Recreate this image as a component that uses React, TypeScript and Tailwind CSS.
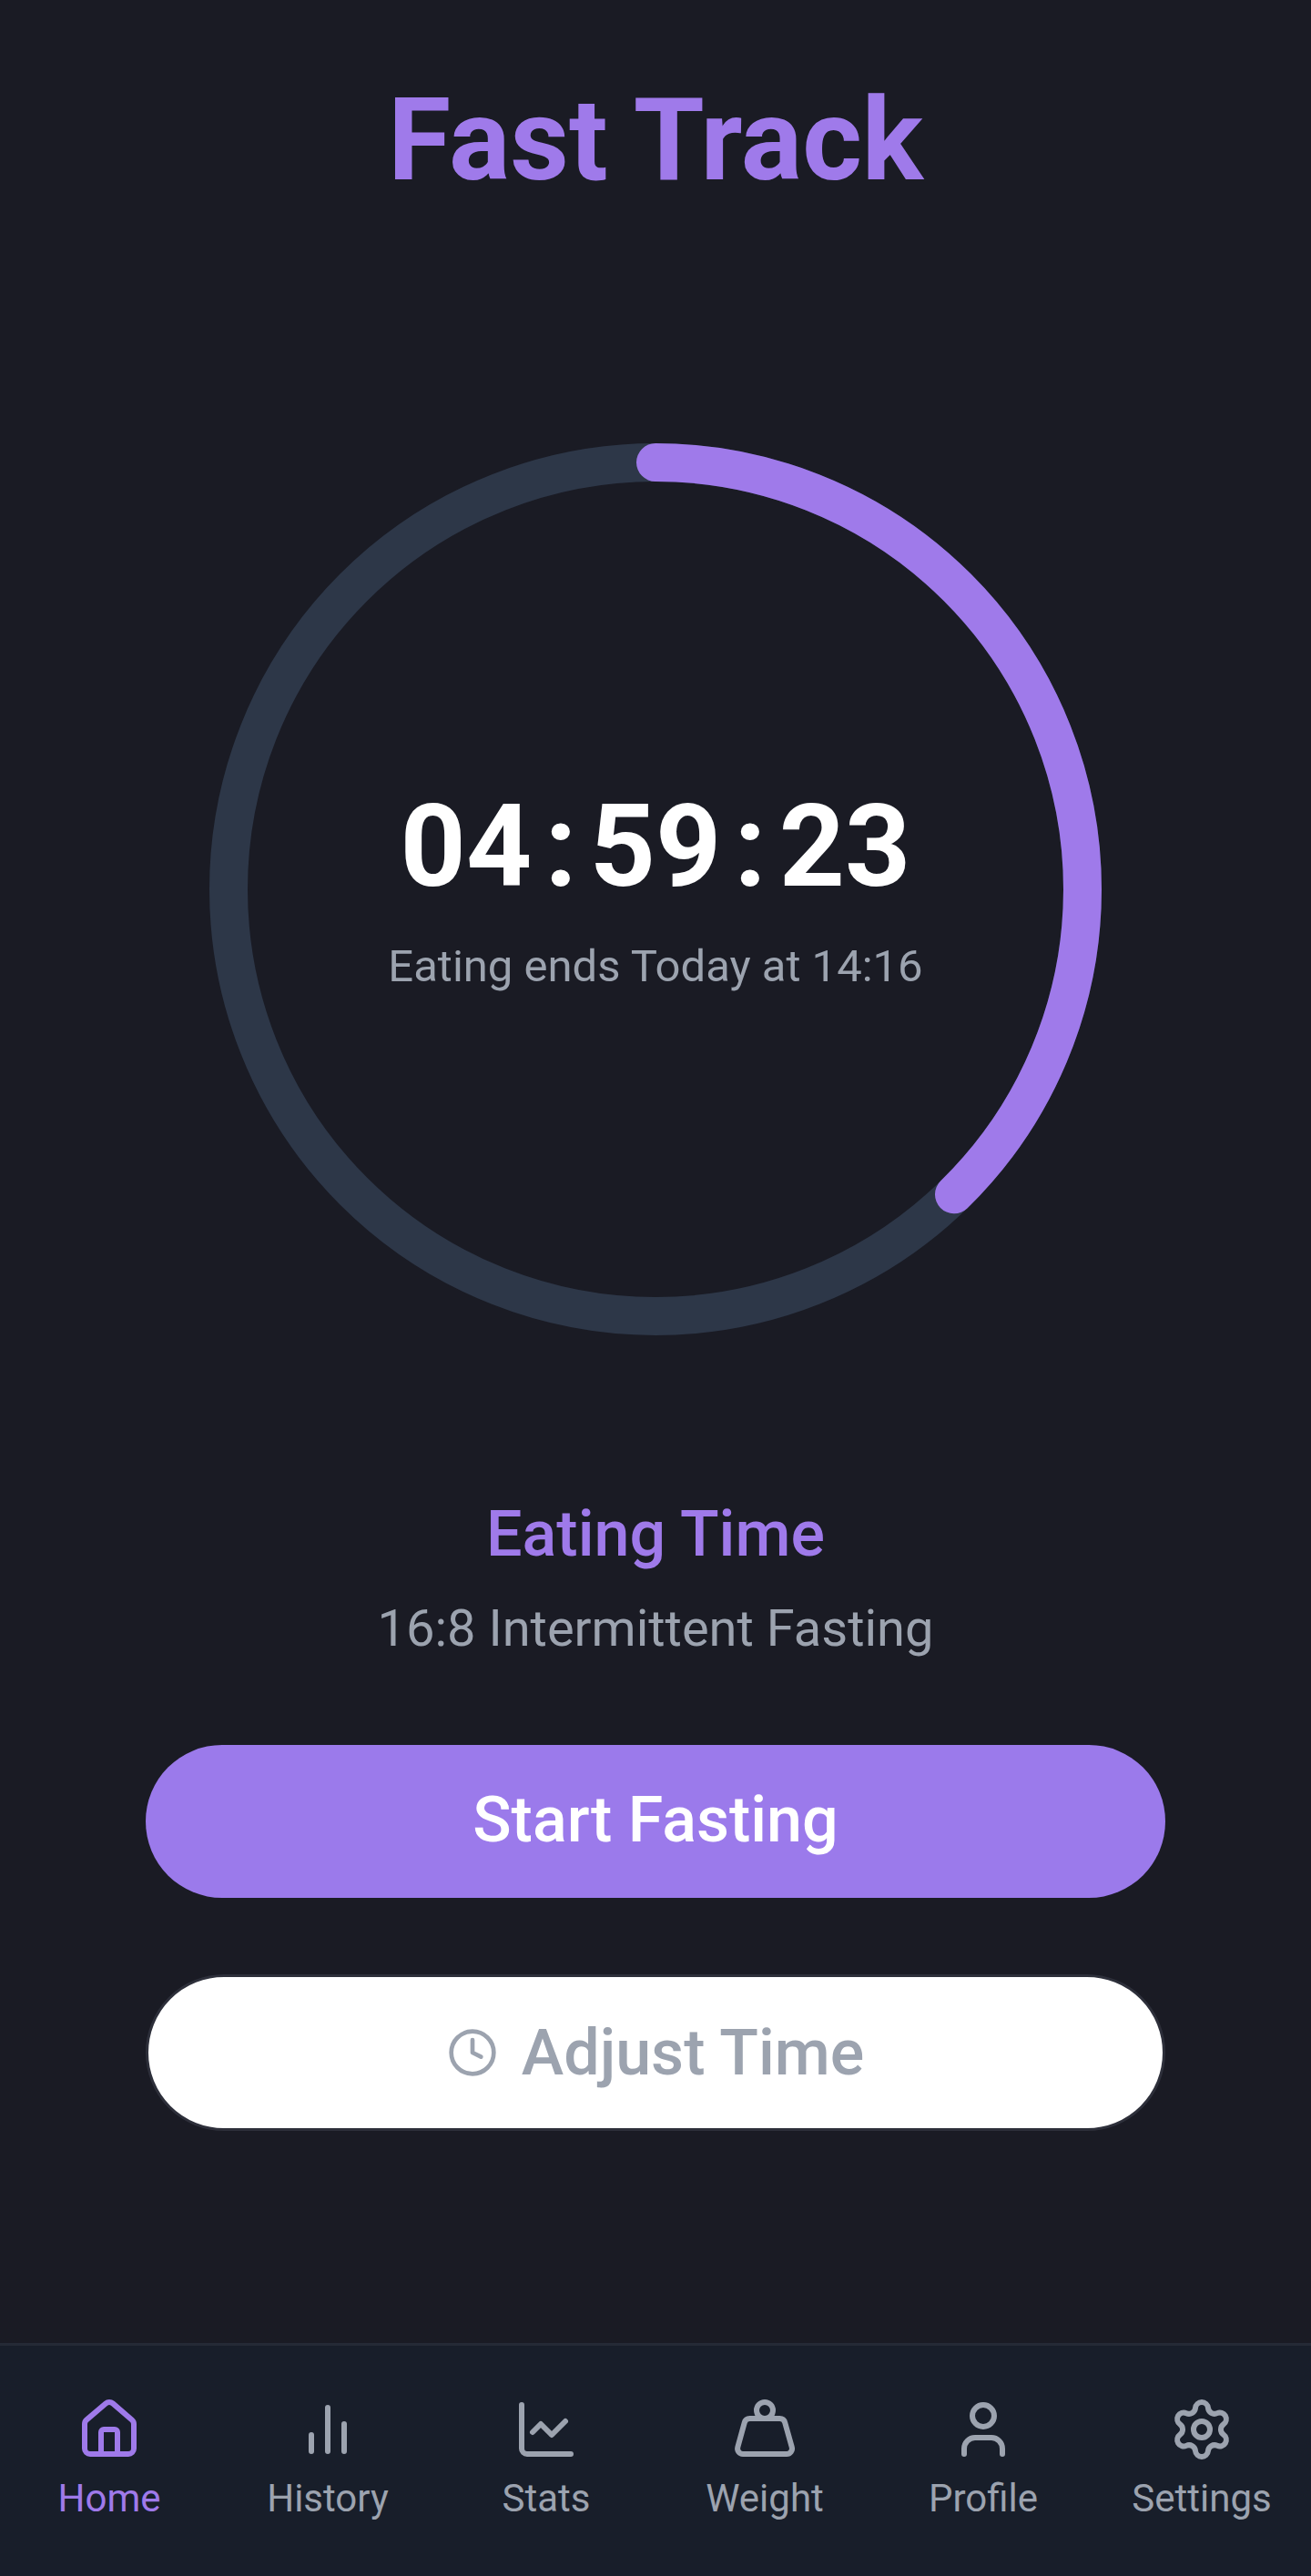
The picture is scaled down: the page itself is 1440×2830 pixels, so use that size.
import { Clock, House, ChartLine, Weight, User, Settings } from "lucide-react";
import type { ReactNode } from "react";

function HistoryIcon() {
  return (
    <svg width="72" height="72" viewBox="0 0 24 24" fill="none" stroke="currentColor" strokeWidth="2" strokeLinecap="round" strokeLinejoin="round">
      <path d="M18 20V10" />
      <path d="M12 20V4" />
      <path d="M6 20v-6" />
    </svg>
  );
}

function NavItem({ icon, label, active }: { icon: ReactNode; label: string; active?: boolean }) {
  return (
    <div className={`flex w-[240px] flex-col items-center ${active ? "text-[#9f7aea]" : "text-[#9ca3af]"}`}>
      {icon}
      <span className="mt-[10px] text-[42px] leading-[60px]">{label}</span>
    </div>
  );
}

export default function App() {
  return (
    <div className="flex h-[2830px] w-[1440px] flex-col bg-[#1a1b24] font-['Roboto',sans-serif]">
      <h1 className="pt-[74px] text-center text-[126px] font-bold leading-[160px] text-[#9f7aea]">Fast Track</h1>

      {/* Timer ring */}
      <div className="relative mx-auto mt-[253px] h-[980px] w-[980px]">
        <svg width="980" height="980" viewBox="0 0 980 980" fill="none">
          <circle cx="490" cy="490" r="469" stroke="#2d3748" strokeWidth="42" />
          <circle
            cx="490"
            cy="490"
            r="469"
            stroke="#9f7aea"
            strokeWidth="42"
            strokeLinecap="round"
            strokeDasharray="1110 2947"
            transform="rotate(-90 490 490)"
          />
        </svg>
        <div className="absolute inset-0 flex flex-col items-center justify-center">
          <div className="flex items-center text-[126px] font-bold leading-[140px] text-white">
            <span>04</span>
            <span className="mx-[14px]">:</span>
            <span>59</span>
            <span className="mx-[14px]">:</span>
            <span>23</span>
          </div>
          <p className="mt-[30px] text-[49px] leading-[64px] text-[#9ca3af]">Eating ends Today at 14:16</p>
        </div>
      </div>

      <div className="mt-[170px] text-center">
        <h2 className="text-[70px] font-medium leading-[96px] text-[#9f7aea]">Eating Time</h2>
        <p className="mt-[20px] text-[56px] leading-[72px] text-[#9ca3af]">16:8 Intermittent Fasting</p>
      </div>

      <div className="mt-[92px] flex flex-col gap-[84px] px-[160px]">
        <button className="h-[168px] rounded-full bg-[#9b7aeb] pb-[3px] text-[70px] font-medium text-white">Start Fasting</button>
        <button className="flex h-[172px] items-center justify-center gap-[26px] rounded-full border-[3px] border-[#2d2f3a] bg-white text-[70px] font-medium text-[#9ca3af]">
          <Clock size={56} strokeWidth={2} />
          Adjust Time
        </button>
      </div>

      {/* Bottom nav */}
      <nav className="mt-auto flex h-[256px] border-t-[3px] border-[#252a36] bg-[#181e2a] pt-[56px]">
        <NavItem icon={<House size={72} strokeWidth={2} />} label="Home" active />
        <NavItem icon={<HistoryIcon />} label="History" />
        <NavItem icon={<ChartLine size={72} strokeWidth={2} />} label="Stats" />
        <NavItem icon={<Weight size={72} strokeWidth={2} />} label="Weight" />
        <NavItem icon={<User size={72} strokeWidth={2} />} label="Profile" />
        <NavItem icon={<Settings size={72} strokeWidth={2} />} label="Settings" />
      </nav>
    </div>
  );
}
